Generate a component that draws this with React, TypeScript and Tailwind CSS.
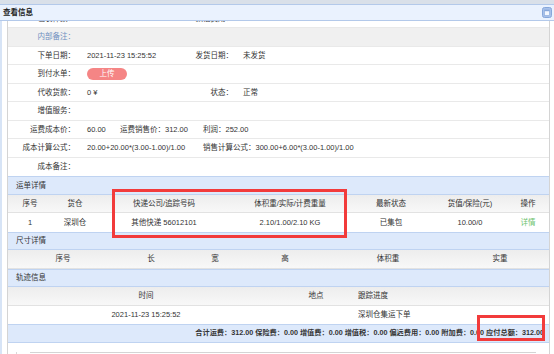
import React from "react";

type Col = { w: string; align?: string };

const InfoRow: React.FC<{
  label: string;
  value?: React.ReactNode;
  label2?: string;
  value2?: React.ReactNode;
  muted?: boolean;
}> = ({ label, value, label2, value2, muted }) => (
  <div
    className={`flex h-[18.5px] items-center border-b border-[#e9e9e9] whitespace-nowrap ${
      muted ? "bg-[#f0f0f0] text-[#6f8fc0]" : ""
    }`}
  >
    <div className="w-[67px] shrink-0 text-right">{label}</div>
    {label2 ? (
      <>
        <div className="w-[105px] shrink-0 pl-[12px]">{value}</div>
        <div className="w-[53px] shrink-0 text-right">{label2}</div>
        <div className="pl-[10px]">{value2}</div>
      </>
    ) : (
      <div className="flex-1 pl-[12px]">{value}</div>
    )}
  </div>
);

const Section: React.FC<{ title: string }> = ({ title }) => (
  <div className="flex h-[18.5px] items-center border-y border-[#bfd3f1] bg-[#dde9fb] pl-[8px] text-[#333]">
    {title}
  </div>
);

const TRow: React.FC<{ cols: Col[]; cells: React.ReactNode[]; head?: boolean }> = ({
  cols,
  cells,
  head,
}) => (
  <div
    className={`flex h-[18.5px] items-center whitespace-nowrap ${
      head ? "bg-gradient-to-b from-[#ededed] to-[#f8f8f8] border-b border-[#e2e2e2]" : "bg-white"
    }`}
  >
    {cells.map((c, i) => (
      <div key={i} className={`${cols[i].w} shrink-0 ${cols[i].align ?? "text-center"}`}>
        {c}
      </div>
    ))}
  </div>
);

const shipCols: Col[] = [
  { w: "w-[44px]" },
  { w: "w-[46px]" },
  { w: "w-[132px]" },
  { w: "w-[120px]" },
  { w: "w-[82px]" },
  { w: "w-[76px]" },
  { w: "w-[40px]" },
];

const sizeCols: Col[] = [
  { w: "w-[110px]" },
  { w: "w-[66px]" },
  { w: "w-[62px]" },
  { w: "w-[78px]" },
  { w: "w-[128px]" },
  { w: "w-[96px]" },
];

const trackCols: Col[] = [
  { w: "w-[276px]" },
  { w: "w-[64px]" },
  { w: "w-[200px]", align: "text-left pl-[10px]" },
];

const App: React.FC = () => {
  return (
    <div className="relative flex h-[354px] w-[554px] flex-col overflow-hidden bg-white font-['Liberation_Sans','Noto_Sans_CJK_SC',sans-serif] text-[7.5px] text-[#333]">
      <div className="h-[4px] shrink-0 bg-[#d9e0e9]" />
      <div className="flex h-[17px] shrink-0 items-center justify-between border-y border-[#b3c9ea] bg-[#eaf2fe] pl-[3px] pr-[2px]">
        <span className="font-bold text-[#222]">查看信息</span>
        <svg width="10" height="11" viewBox="0 0 10 11">
          <rect x="0.5" y="0.5" width="9" height="10" rx="2" fill="#a7c0e9" stroke="#86a7da" />
          <rect x="2.5" y="3" width="5" height="5.5" fill="#f3f7fe" stroke="#86a7da" strokeWidth="0.6" />
          <rect x="2.5" y="3" width="5" height="1.2" fill="#86a7da" />
        </svg>
      </div>

      <div className="flex min-h-0 flex-1">
        <div className="w-[2px] shrink-0 bg-[#d7e4f6]" />
        <div className="w-[5px] shrink-0" />
        <div className="w-[543px] shrink-0 overflow-hidden border-x border-[#d4d4d4]">
          <div className="-mt-[11.5px]">
            <InfoRow label="包裹件数：" value="1" label2="预估费用：" value2="0.00 ¥" />
            <InfoRow label="内部备注：" muted />
            <InfoRow
              label="下单日期："
              value="2021-11-23 15:25:52"
              label2="发货日期："
              value2="未发货"
            />
            <InfoRow
              label="到付水单："
              value={
                <span className="inline-flex h-[12px] w-[40px] items-center justify-center rounded-full bg-[#f58585] text-white">
                  上传
                </span>
              }
            />
            <InfoRow label="代收货款：" value="0 ¥" label2="状态：" value2="正常" />
            <InfoRow label="增值服务：" />
            <InfoRow
              label="运费成本价："
              value={
                <span className="flex">
                  <span className="w-[33px]">60.00</span>
                  <span className="w-[83px]">运费销售价：312.00</span>
                  <span>利润：252.00</span>
                </span>
              }
            />
            <InfoRow
              label="成本计算公式："
              value={
                <span className="flex">
                  <span className="w-[116px]">20.00+20.00*(3.00-1.00)/1.00</span>
                  <span>销售计算公式：300.00+6.00*(3.00-1.00)/1.00</span>
                </span>
              }
            />
            <div className="flex h-[18.5px] items-center">
              <div className="w-[67px] text-right">成本备注：</div>
            </div>

            <Section title="运单详情" />
            <TRow
              head
              cols={shipCols}
              cells={["序号", "货仓", "快递公司/追踪号码", "体积重/实际/计费重量", "最新状态", "货值/保险(元)", "操作"]}
            />
            <TRow
              cols={shipCols}
              cells={[
                "1",
                "深圳仓",
                "其他快递 56012101",
                "2.10/1.00/2.10 KG",
                "已集包",
                "10.00/0",
                <span className="text-[#6cc26c]">详情</span>,
              ]}
            />

            <Section title="尺寸详情" />
            <TRow head cols={sizeCols} cells={["序号", "长", "宽", "高", "体积重", "实重"]} />

            <Section title="轨迹信息" />
            <TRow head cols={trackCols} cells={["时间", "地点", "跟踪进度"]} />
            <TRow cols={trackCols} cells={["2021-11-23 15:25:52", "", "深圳仓集运下单"]} />

            <div className="flex h-[18.5px] items-center justify-end whitespace-nowrap border-y border-[#bfd3f1] bg-[#dde9fb] pr-[5px] text-[7.2px] font-bold">
              合计运费：312.00 保险费：0.00 增值费：0.00 增值税：0.00 偏远费用：0.00 附加费：0.00 应付总额：312.00
            </div>

            <div className="ml-[8px] h-[20px] border-l border-[#d9d9d9]">
              <div className="ml-[13px] mr-[13px] mt-[9px] border-t border-[#d4d4d4]" />
            </div>
          </div>
        </div>
      </div>

      <div className="pointer-events-none absolute left-[112px] top-[189px] h-[49px] w-[235px] border-[3px] border-[#f23b3b]" />
      <div className="pointer-events-none absolute left-[477px] top-[315px] h-[26px] w-[68px] border-[3px] border-[#f23b3b]" />
    </div>
  );
};

export default App;
